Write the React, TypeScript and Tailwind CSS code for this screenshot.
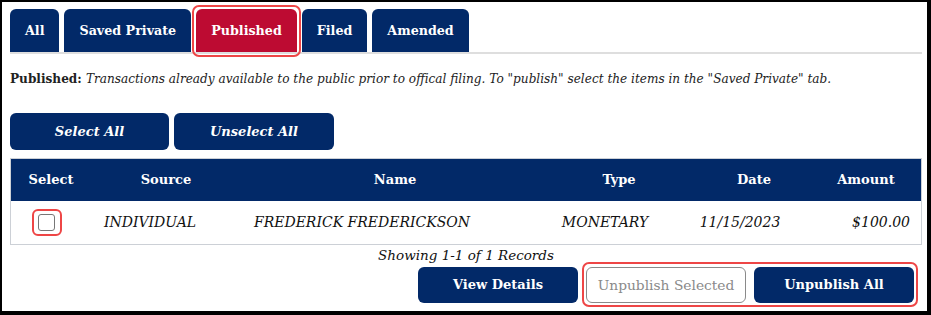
import React from 'react';

const NAVY = 'bg-[#022968]';

const tabs = ['All', 'Saved Private', 'Published', 'Filed', 'Amended'];

function Tab({ label }: { label: string }) {
    const active = label === 'Published';
    return (
        <div className="relative">
            <div
                className={`h-[43px] px-[15px] flex items-center rounded-t-[6px] text-white font-bold text-[12.7px] ${active ? 'bg-[#bd0b32]' : NAVY}`}
            >
                {label}
            </div>
            {active && (
                <div className="absolute -left-[4px] -right-[4px] -top-[4px] -bottom-[5px] border-2 border-[#ee4646] rounded-[7px]" />
            )}
        </div>
    );
}

export default function App() {
    return (
        <div className="w-[931px] h-[315px] bg-black pt-[2px] pl-[2px] pr-[4px] pb-[4px] font-['DejaVu_Serif',serif]">
            <div className="h-full bg-white pt-[7px] pl-[8px] pr-[5px]">
                {/* tabs */}
                <div className="flex items-end gap-[5px] border-b-2 border-[#dedede]">
                    {tabs.map((t) => (
                        <Tab key={t} label={t} />
                    ))}
                </div>

                <p className="mt-[15px] text-[12.1px] leading-[20px] text-[#222]">
                    <span className="font-bold">Published: </span>
                    <i>Transactions already available to the public prior to offical filing. To "publish" select the items in the "Saved Private" tab.</i>
                </p>

                <div className="mt-[24px] flex gap-[5px]">
                    <button className={`w-[159px] h-[37px] rounded-[6px] ${NAVY} text-white italic font-bold text-[13px]`}>Select All</button>
                    <button className={`w-[160px] h-[37px] rounded-[6px] ${NAVY} text-white italic font-bold text-[13px]`}>Unselect All</button>
                </div>

                {/* table */}
                <div className="mt-[8px] border border-[#ccd0d6]">
                    <div className={`grid grid-cols-[80px_140px_310px_140px_130px_1fr] h-[42px] items-center ${NAVY} text-white font-bold text-[13px]`}>
                        <div className="text-center">Select</div>
                        <div className="text-center pl-[10px]">Source</div>
                        <div className="text-center pl-[18px]">Name</div>
                        <div className="text-center pl-[16px]">Type</div>
                        <div className="text-center pl-[16px]">Date</div>
                        <div className="text-center">Amount</div>
                    </div>
                    <div className="grid grid-cols-[80px_140px_310px_140px_130px_1fr] h-[43px] items-center italic text-[14px] text-[#111]">
                        <div className="flex justify-center pr-[9px]">
                            <span className="relative">
                                <span className="block w-[17px] h-[17px] rounded-[3px] border border-[#777] bg-white" />
                                <span className="absolute -left-[6px] -right-[7px] -top-[5px] -bottom-[5px] border-2 border-[#ee4646] rounded-[6px]" />
                            </span>
                        </div>
                        <div className="text-center pr-[22px]">INDIVIDUAL</div>
                        <div className="text-center pr-[48px]">FREDERICK FREDERICKSON</div>
                        <div className="text-center pr-[12px]">MONETARY</div>
                        <div className="text-center pr-[12px]">11/15/2023</div>
                        <div className="text-right pr-[11px]">$100.00</div>
                    </div>
                </div>

                <p className="text-center italic text-[13.5px] leading-[20px] text-[#111]">Showing 1-1 of 1 Records</p>

                <div className="mt-[2px] flex justify-end gap-[8px] pr-[8px]">
                    <button className={`w-[160px] h-[36px] rounded-[6px] ${NAVY} text-white font-bold text-[13px]`}>View Details</button>
                    <div className="relative flex gap-[8px]">
                        <button className="w-[160px] h-[36px] rounded-[6px] border border-[#8a8a8a] bg-white text-[#8a8a8a] text-[13.8px]">Unpublish Selected</button>
                        <button className={`w-[160px] h-[36px] rounded-[6px] ${NAVY} text-white font-bold text-[13px]`}>Unpublish All</button>
                        <div className="absolute -left-[4px] -right-[4px] -top-[5px] -bottom-[4px] border-2 border-[#ee4646] rounded-[7px]" />
                    </div>
                </div>
            </div>
        </div>
    );
}
